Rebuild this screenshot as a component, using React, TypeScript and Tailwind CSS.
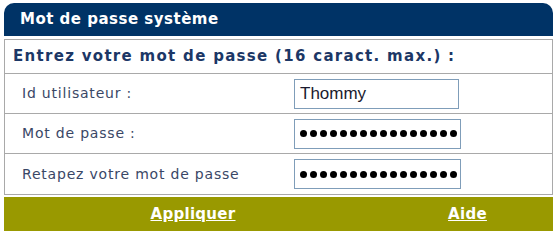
export default function App() {
  const rows = [
    { label: "Id utilisateur :", value: "Thommy", type: "text" },
    { label: "Mot de passe :", value: "", type: "pw" },
    { label: "Retapez votre mot de passe", value: "", type: "pw" },
  ];

  return (
    <div className="w-[556px] h-[234px] bg-white pt-[3px] pl-[4px] pr-[3px] font-['DejaVu_Sans',Verdana,sans-serif]">
      {/* Title bar */}
      <div className="h-[33px] bg-[#003366] rounded-t-[10px] flex items-center pl-[16px] text-white font-bold text-[15px] tracking-[0.5px]">
        Mot de passe système
      </div>

      <div className="mt-[3px] border border-[#a9a9a9]">
        <div className="h-[34px] flex items-center pl-[8px] font-bold text-[15px] tracking-[1.3px] text-[#1c3766] border-b border-[#a9a9a9]">
          Entrez votre mot de passe (16 caract. max.) :
        </div>
        {rows.map((r, i) => (
          <div
            key={i}
            className={`h-[40px] flex items-center ${i < rows.length - 1 ? "border-b border-[#a9a9a9]" : ""}`}
          >
            <div className="w-[276px] pl-[17px] text-[14px] tracking-[0.8px] text-[#3a4766]">{r.label}</div>
            <div className="pl-[13px]">
              <div
                className={`h-[30px] border border-[#7f9db9] flex items-center overflow-hidden ${
                  r.type === "pw" ? "w-[167px] pl-[5px]" : "w-[165px] px-[5px]"
                }`}
              >
                {r.type === "pw" ? (
                  <div className="flex gap-[3px]">
                    {Array.from({ length: 17 }).map((_, j) => (
                      <span key={j} className="shrink-0 w-[7px] h-[7px] rounded-full bg-black" />
                    ))}
                  </div>
                ) : (
                  <span className="text-[17px] text-[#1a1a2e] font-['Liberation_Sans',Arial,sans-serif]">
                    {r.value}
                  </span>
                )}
              </div>
            </div>
          </div>
        ))}
      </div>

      {/* Footer */}
      <div className="mt-[2px] h-[34px] bg-[#999900] flex items-center text-white font-bold text-[15px] tracking-[0.3px]">
        <a href="#" className="w-[378px] text-center underline">
          Appliquer
        </a>
        <a href="#" className="flex-1 text-center underline">
          Aide
        </a>
      </div>
    </div>
  );
}
